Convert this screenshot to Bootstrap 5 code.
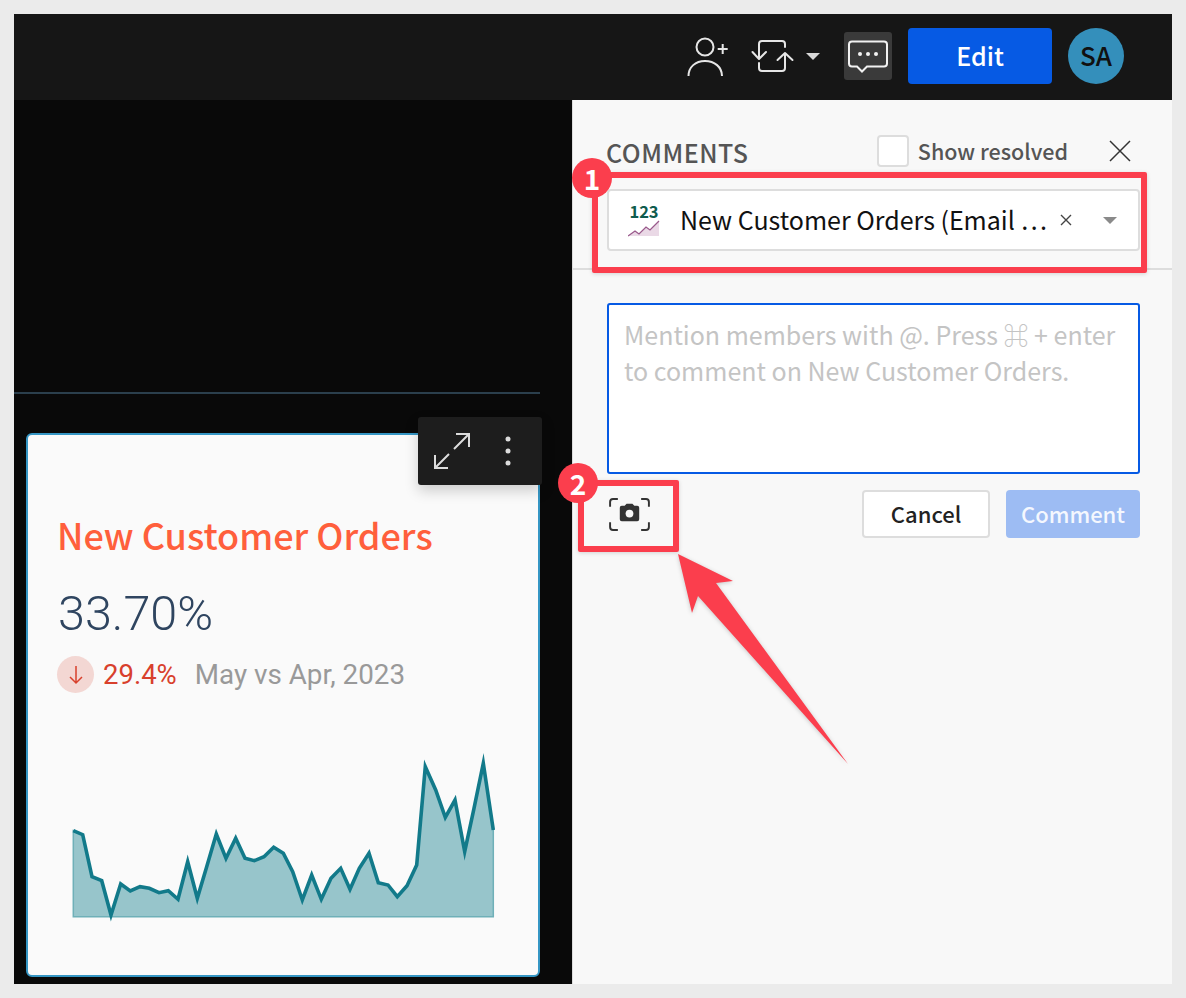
<!DOCTYPE html>
<html lang="en">
<head>
<meta charset="utf-8">
<title>Comments</title>
<link href="https://cdn.jsdelivr.net/npm/bootstrap@5.3.0/dist/css/bootstrap.min.css" rel="stylesheet">
<style>
html,body{height:100%}
body{background:#ebebeb;font-family:"Noto Sans CJK SC","Noto Sans",sans-serif;position:relative;overflow:hidden}
.shell{margin:14px;height:970px;width:1158px;background:#090909}
.topbar{height:86px;background:#161616;padding-right:48px;padding-bottom:2px}
.ic-person{width:44px;height:42px;margin-right:20px}
.ic-swap{width:46px;height:36px;margin-right:10px}
.caret-w{width:0;height:0;border-left:7px solid transparent;border-right:7px solid transparent;border-top:7px solid #d8d8d8;margin-right:24px}
.chat-btn{width:48px;height:48px;background:#3a3a3a;border-radius:3px;margin-right:16px}
.edit-btn{width:144px;height:56px;background:#065ae4;border:0;border-radius:4px;color:#fff;font-size:25px;font-weight:500;line-height:1;margin-right:16px;padding:0 0 2px}
.edit-btn:hover{background:#065ae4;color:#fff}
.avatar{width:56px;height:56px;background:#348fbb;color:#111;font-size:26px;font-weight:500;border-radius:50%;padding-bottom:3px}
.left-pane{width:558px;background:#090909}
.void{height:294px;border-bottom:2px solid #2b3f4d;width:526px}
.kpi{width:514px;height:544px;margin:39px 0 0 12px;background:#fafafa;border:2px solid #3596c4;border-radius:6px;padding:75px 0 0 30px}
.kpi-title{font-size:36px;font-weight:500;line-height:50px;color:#ff5f3c;white-space:nowrap;margin-top:-1px;margin-left:-1px}
.kpi-val{font-family:Roboto,sans-serif;font-weight:300;font-size:48.500px;line-height:54px;color:#2f4560;margin-top:28px}
.kpi-row{margin-top:15px;margin-left:-1px;font-family:Roboto,sans-serif;font-size:27.500px;line-height:37px}
.arrow-dot{width:37px;height:37px;background:#f3d7d3;border-radius:50%;margin-right:9px}
.down{color:#d8402c;margin-right:18px}
.period{color:#999;font-size:27.800px}
.spark{display:block;margin:57px 0 0 2px}
.float-tools{position:absolute;left:418px;top:417px;width:124px;height:68px;background:#1d1d1d;border-radius:3px;box-shadow:0 6px 14px rgba(0,0,0,.18)}
.tool-expand{margin-left:16px}
.tool-more{margin-left:35px}
.side{width:600px;background:#f8f8f8;border-left:1px solid #ddd}
.side-head{height:170px;border-bottom:2px solid #ddd;padding:31px 32px 0 34px}
.head-row{padding-right:8px}
.c-title{font-size:25px;font-weight:500;letter-spacing:.5px;color:#555;line-height:36px;margin-top:3px;margin-left:-1px}
.resolved-box{width:32px;height:32px;border:2px solid #ddd;background:#fff;border-radius:3px;margin:0 9px 0 0;flex:none}
.resolved-txt{font-size:21.500px;font-weight:500;color:#555;line-height:32px}
.close-ic{width:24px;height:24px;margin-left:40px;flex:none}
.picker{height:62px;margin-top:19px;width:533px;background:#fff;border:2px solid #ddd;border-radius:4px;padding:0 21px 0 19px}
.picker-txt{font-size:25px;color:#111;line-height:36px;margin-left:20px;margin-bottom:3px;white-space:nowrap;flex:1;min-width:0}
.picker-x{width:12px;height:12px;margin-right:31px;flex:none}
.caret-g{width:0;height:0;border-left:7px solid transparent;border-right:7px solid transparent;border-top:7px solid #8a8a8a;flex:none}
.num-ic{width:32px;flex:none}
.num-txt{font-size:16.500px;font-weight:700;line-height:17px;color:#0f5c4e;text-align:center}
.num-ic svg{display:block}
.composer{padding:33px 32px 0 34px}
.note{width:533px;height:171px;border:2px solid #065ae4;border-radius:3px;font-size:25px;line-height:36px;padding:11px 15px;resize:none;color:#333;box-shadow:none}
.note::placeholder{color:#c4c4c4;opacity:1}
.note:focus{border-color:#065ae4;box-shadow:none}
.acts{margin-top:16px;height:48px}
.cam{width:41px;height:33px;margin-right:auto;margin-left:2px}
.cancel-b{width:128px;height:48px;background:#fff;border:2px solid #ddd;border-radius:4px;font-size:22px;font-weight:500;color:#222;padding:0 0 2px;line-height:1}
.send-b{width:134px;height:48px;background:#9dbcf3;border:0;border-radius:4px;font-size:22px;font-weight:500;color:#fff;padding:0 0 2px;margin-left:16px;line-height:1;opacity:1}
.send-b:disabled{background:#9dbcf3;color:#f4f7fe;opacity:1}
.mark-box{position:absolute;border:6px solid #fb3e4d;border-radius:2px;box-shadow:0 1px 4px rgba(0,0,0,.15)}
.mb1{left:592px;top:172px;width:555px;height:101px}
.mb2{left:578px;top:480px;width:101px;height:72px}
.mark-num{position:absolute;width:40px;height:40px;background:#fb3e4d;border-radius:50%;color:#fff;font-weight:700;font-size:28px;line-height:1}
.mn1{left:572px;top:158px}
.mn2{left:558px;top:463px}
.mark-arrow{position:absolute;left:670px;top:545px;width:190px;height:230px;filter:drop-shadow(0 1px 2px rgba(0,0,0,.2))}
</style>
</head>
<body>
<div class="shell d-flex flex-column">
  <header class="topbar d-flex align-items-center justify-content-end flex-shrink-0">
    <svg class="ic-person" viewBox="686 35 44 42" fill="none" stroke="#e6e6e6" stroke-width="2"><circle cx="705" cy="47" r="8.500"/><path d="M688.500 76c0-9 7-15 16.500-15s17 6 17 15"/><path d="M717.700 49h10M722.700 44v10"/></svg>
    <svg class="ic-swap" viewBox="750 38 46 36" fill="none" stroke="#e6e6e6" stroke-width="2" stroke-linecap="round" stroke-linejoin="round"><path d="M759 58V44q0-3 3-3h20q3 0 3 3v3"/><path d="M752.500 52l6.500 7 7-7"/><path d="M785 54v14q0 3-3 3h-20q-3 0-3-3v-5"/><path d="M777.500 60l7.500-7 7.500 7"/></svg>
    <span class="caret-w"></span>
    <span class="chat-btn d-flex align-items-center justify-content-center">
      <svg width="40" height="34" viewBox="0 0 40 34" fill="none"><path d="M4 2.500h32q3 0 3 3v19q0 3-3 3H19l-5 5-5-5H4q-3 0-3-3v-19q0-3 3-3z" stroke="#f2f2f2" stroke-width="2"/><circle cx="12" cy="15" r="2" fill="#f2f2f2"/><circle cx="20" cy="15" r="2" fill="#f2f2f2"/><circle cx="28" cy="15" r="2" fill="#f2f2f2"/></svg>
    </span>
    <button type="button" class="btn edit-btn">Edit</button>
    <span class="avatar d-flex align-items-center justify-content-center">SA</span>
  </header>
  <div class="d-flex flex-grow-1">
    <div class="left-pane">
      <div class="void"></div>
      <div class="kpi">
        <div class="kpi-title">New Customer Orders</div>
        <div class="kpi-val">33.70%</div>
        <div class="kpi-row d-flex align-items-center">
          <span class="arrow-dot d-flex align-items-center justify-content-center">
            <svg width="16" height="20" viewBox="0 0 16 20" fill="none" stroke="#d8402c" stroke-width="1.500"><path d="M8 1v17M2 12l6 6 6-6"/></svg>
          </span>
          <span class="down">29.4%</span><span class="period">May vs Apr, 2023</span>
        </div>
        <svg class="spark" width="450" height="180" viewBox="60 750 450 180">
          <path d="M73.300 830.700L82.700 834.700 92 876.700 101.700 880.700 111 915 120.700 884 130.300 891 140 886.700 149.300 888.300 159 892.700 168.300 890.700 178 899.300 187.700 861.700 197.300 898.300 206.700 866.700 216.300 834 226 858.300 235.700 838.300 245 858.300 254.300 860.700 264 856.700 273.700 847.300 283.300 853.300 292.700 871.700 302.300 900 311.700 875 321.300 899.300 331 878.300 340.700 868.300 350 889.300 359.300 868.300 369 853.300 378.300 882.700 388 885 397.300 896.700 407 885.700 416.700 865 425.300 766.700 435.700 790 445.300 817.300 455 800 464.700 851.700 474 808.300 483.300 763.300 493.300 830V916.700H73.300Z" fill="#97c5cb" stroke="#6fb0b8" stroke-width="1.500"/>
          <path d="M73.300 830.700L82.700 834.700 92 876.700 101.700 880.700 111 915 120.700 884 130.300 891 140 886.700 149.300 888.300 159 892.700 168.300 890.700 178 899.300 187.700 861.700 197.300 898.300 206.700 866.700 216.300 834 226 858.300 235.700 838.300 245 858.300 254.300 860.700 264 856.700 273.700 847.300 283.300 853.300 292.700 871.700 302.300 900 311.700 875 321.300 899.300 331 878.300 340.700 868.300 350 889.300 359.300 868.300 369 853.300 378.300 882.700 388 885 397.300 896.700 407 885.700 416.700 865 425.300 766.700 435.700 790 445.300 817.300 455 800 464.700 851.700 474 808.300 483.300 763.300 493.300 830" fill="none" stroke="#127a8a" stroke-width="3.600" stroke-miterlimit="10"/>
        </svg>
      </div>
    </div>
    <aside class="side">
      <div class="side-head">
        <div class="head-row d-flex align-items-center">
          <div class="c-title me-auto">COMMENTS</div>
          <input class="resolved-box form-check-input" type="checkbox" aria-label="Show resolved">
          <span class="resolved-txt">Show resolved</span>
          <svg class="close-ic" viewBox="0 0 24 24" fill="none" stroke="#333" stroke-width="1.500"><path d="M2 2l20 20M22 2L2 22"/></svg>
        </div>
        <div class="picker d-flex align-items-center">
          <div class="num-ic">
            <div class="num-txt">123</div>
            <svg width="32" height="17" viewBox="0 16 32 17"><path d="M0 32l7-5 4 3 7-7 4 3 9-9v15H0z" fill="#ead9e6"/><path d="M0 32l7-5 4 3 7-7 4 3 9-9" fill="none" stroke="#9a5a8c" stroke-width="1.300"/></svg>
          </div>
          <span class="picker-txt">New Customer Orders (Email …</span>
          <svg class="picker-x" viewBox="0 0 12 12" fill="none" stroke="#444" stroke-width="1.400"><path d="M1 1l10 10M11 1L1 11"/></svg>
          <span class="caret-g"></span>
        </div>
      </div>
      <div class="composer">
        <textarea class="form-control note" placeholder="Mention members with @. Press ⌘ + enter to comment on New Customer Orders."></textarea>
        <div class="acts d-flex align-items-center">
          <svg class="cam" viewBox="0 0 42 34" fill="none"><path d="M1 9V4q0-3 3-3h5M33 1h5q3 0 3 3v5M41 25v5q0 3-3 3h-5M9 33H4q-3 0-3-3v-5" stroke="#333" stroke-width="2"/><path d="M11 10q0-2 2-2h3l2-2h6l2 2h3q2 0 2 2v12q0 2-2 2H13q-2 0-2-2z" fill="#333"/><circle cx="21" cy="16" r="4" fill="#f8f8f8"/></svg>
          <button type="button" class="btn cancel-b">Cancel</button>
          <button type="button" class="btn send-b" disabled>Comment</button>
        </div>
      </div>
    </aside>
  </div>
</div>
<div class="float-tools d-flex align-items-center">
  <svg class="tool-expand" width="36" height="36" viewBox="0 0 36 36" fill="none" stroke="#dcdcdc" stroke-width="2"><path d="M22 1h13v13M35 1L20 16M1 22v13h13M1 35l14-14"/></svg>
  <svg class="tool-more" width="6" height="30" viewBox="0 0 6 30" fill="#dcdcdc"><circle cx="3" cy="3" r="2.500"/><circle cx="3" cy="15" r="2.500"/><circle cx="3" cy="27" r="2.500"/></svg>
</div>
<div class="mark-box mb1"></div>
<div class="mark-box mb2"></div>
<svg class="mark-arrow" viewBox="670 545 190 230"><path d="M678 554L733 581 716 583 848 764 698 596 692 613Z" fill="#fb3e4d"/></svg>
<div class="mark-num mn1 d-flex align-items-center justify-content-center">1</div>
<div class="mark-num mn2 d-flex align-items-center justify-content-center">2</div>
<script src="https://cdn.jsdelivr.net/npm/bootstrap@5.3.0/dist/js/bootstrap.bundle.min.js"></script>
</body>
</html>
